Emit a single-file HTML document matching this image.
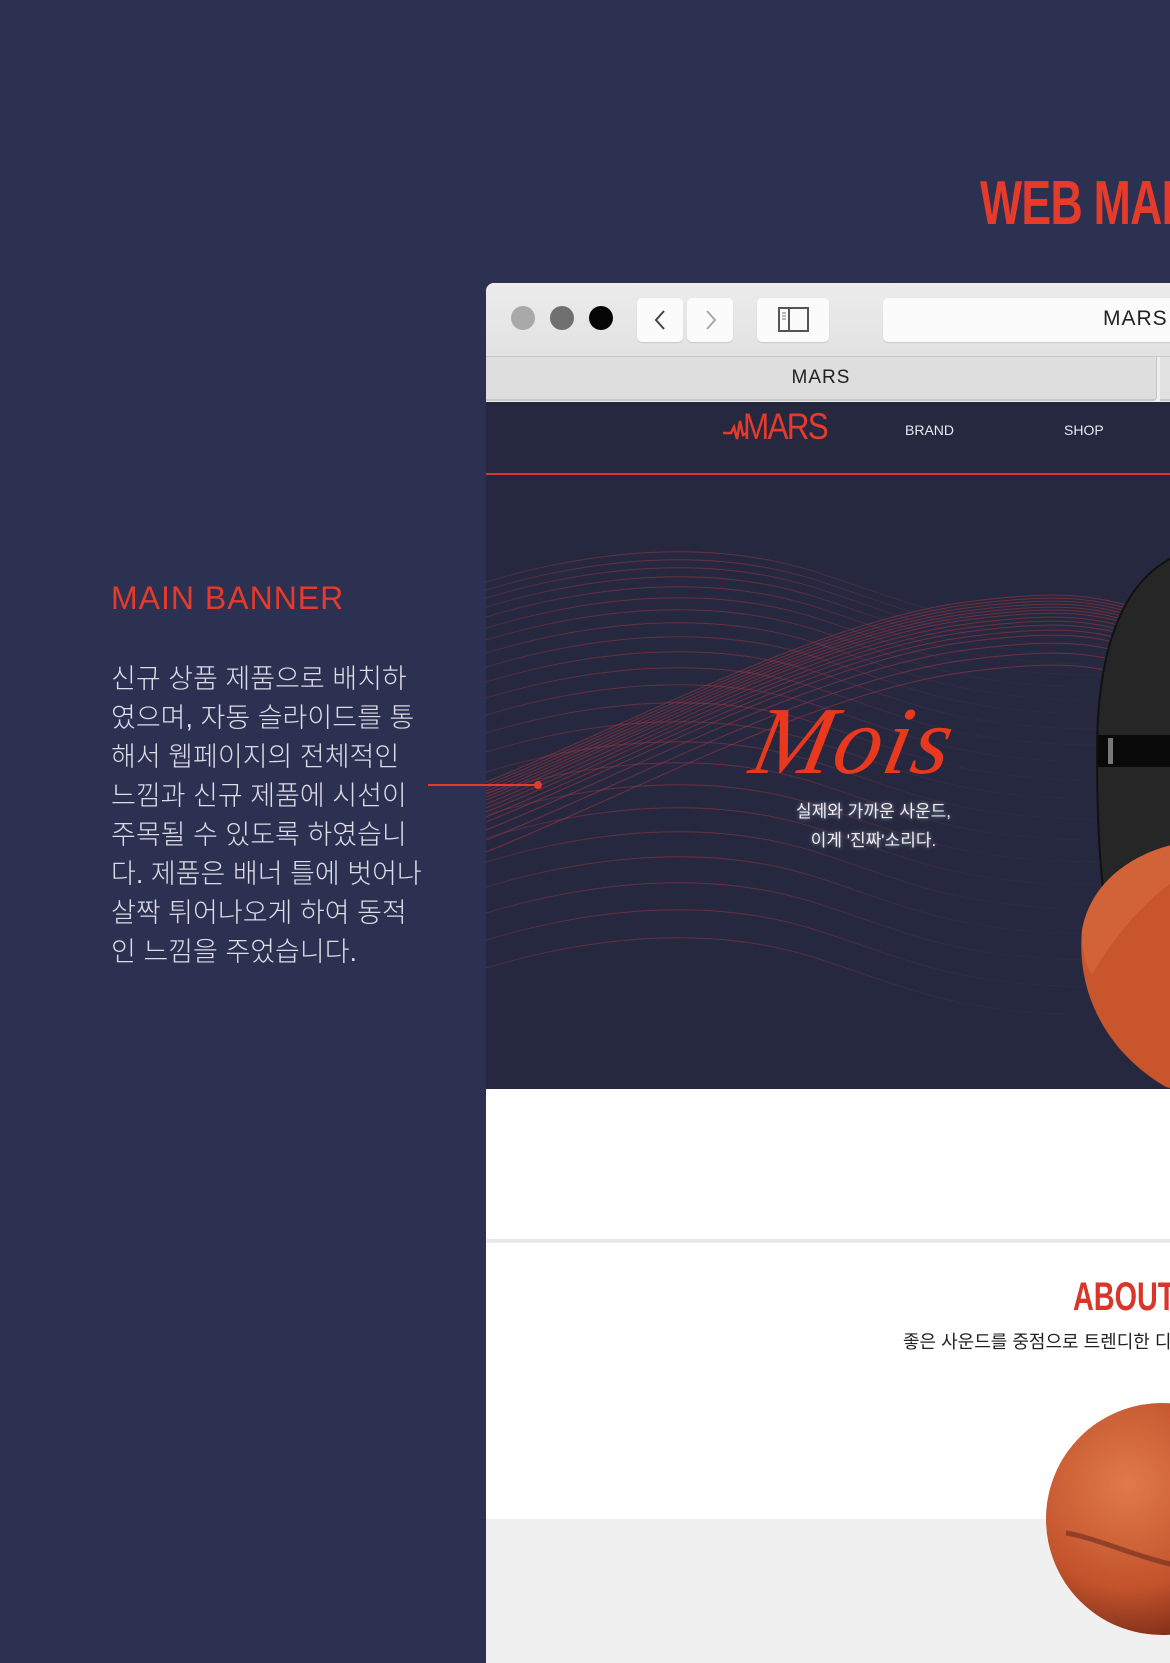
<!DOCTYPE html>
<html><head><meta charset="utf-8"><style>
*{margin:0;padding:0;box-sizing:border-box}
body{width:1170px;height:1654px;overflow:hidden;background:#2c3152;position:relative;font-family:"Liberation Sans","Noto Sans CJK KR",sans-serif}
.abs{position:absolute}
.title{left:980px;top:168px;font-weight:bold;font-size:62px;color:#e63a2a;white-space:nowrap;letter-spacing:-1px;transform:scaleX(.72);transform-origin:left}
.mb{left:111px;top:580px;color:#e63a2a;font-size:32px;letter-spacing:1px;white-space:nowrap}
.para{left:111px;top:660px;color:#dcdde6;font-size:27px;line-height:39px;font-weight:300;white-space:nowrap;font-family:"Liberation Sans","Noto Sans CJK KR",sans-serif}
.browser{left:486px;top:283px;width:684px;height:1380px;background:#f0f0f0;border-radius:8px 0 0 0;overflow:hidden}
.tool{left:0;top:0;width:700px;height:74px;background:linear-gradient(#ececec,#e2e2e2);border-bottom:1px solid #c9c9c9}
.dot{width:24px;height:24px;border-radius:50%;top:23px}
.btn{background:#fbfbfb;border-radius:5px;box-shadow:0 1px 1px rgba(0,0,0,.12)}
.tab{left:0;top:74px;width:671px;height:44px;background:#dedede;border-bottom:2px solid #c8c8c8;border-right:1px solid #c4c4c4;border-radius:0 0 4px 0;text-align:center;line-height:42px;font-size:19px;color:#222;letter-spacing:1px}
.nav{left:0;top:119px;width:700px;height:687px;background:#262840;overflow:hidden}
</style></head><body>
<div class="abs title">WEB MAIN</div>
<div class="abs mb">MAIN BANNER</div>
<div class="abs para">신규 상품 제품으로 배치하<br>였으며, 자동 슬라이드를 통<br>해서 웹페이지의 전체적인<br>느낌과 신규 제품에 시선이<br>주목될 수 있도록 하였습니<br>다. 제품은 배너 틀에 벗어나<br>살짝 튀어나오게 하여 동적<br>인 느낌을 주었습니다.</div>

<div class="abs browser">
 <div class="abs tool">
  <div class="abs dot" style="left:25px;background:#a9a9a9"></div>
  <div class="abs dot" style="left:64px;background:#6f6f6f"></div>
  <div class="abs dot" style="left:103px;background:#050505"></div>
  <div class="abs btn" style="left:151px;top:15px;width:46px;height:44px"></div>
  <div class="abs btn" style="left:201px;top:15px;width:46px;height:44px"></div>
  <svg class="abs" style="left:151px;top:15px" width="96" height="44"><path d="M27 13 L19 22 L27 31" fill="none" stroke="#444" stroke-width="2"/><path d="M70 13 L78 22 L70 31" fill="none" stroke="#aaa" stroke-width="2"/></svg>
  <div class="abs btn" style="left:271px;top:15px;width:72px;height:44px"></div>
  <svg class="abs" style="left:292px;top:24px" width="32" height="26"><rect x="1" y="1" width="29" height="23" fill="none" stroke="#555" stroke-width="2"/><line x1="11" y1="1" x2="11" y2="24" stroke="#555" stroke-width="2"/><line x1="4" y1="6" x2="8" y2="6" stroke="#777"/><line x1="4" y1="9" x2="8" y2="9" stroke="#777"/><line x1="4" y1="12" x2="8" y2="12" stroke="#777"/></svg>
  <div class="abs btn" style="left:397px;top:15px;width:320px;height:44px"></div>
  <div class="abs" style="left:617px;top:24px;font-size:21px;color:#222;letter-spacing:1px">MARS</div>
 </div>
 <div class="abs tab">MARS</div>
 <div class="abs" style="left:674px;top:74px;width:30px;height:44px;background:#e2e2e2;border-bottom:2px solid #c8c8c8"></div>
 <div class="abs nav">
  <svg class="abs" style="left:0;top:0" width="700" height="700">
   <defs>
    <linearGradient id="g1" x1="0" y1="0" x2="0" y2="1"><stop offset="0" stop-color="#b33a3a" stop-opacity=".8"/><stop offset="1" stop-color="#5a3060" stop-opacity=".25"/></linearGradient>
    <path id="w1" d="M0,180 C100,150 220,135 330,170 S480,235 700,225" fill="none" stroke="url(#g1)" stroke-width="1"/>
    <path id="w2" d="M0,380 C150,320 330,220 480,200 S620,210 700,210" fill="none" stroke="#a8383e" stroke-width="1"/>
   </defs>
   <g opacity=".6">
    <use href="#w1"/><use href="#w1" y="8"/><use href="#w1" y="16"/><use href="#w1" y="25"/><use href="#w1" y="35"/><use href="#w1" y="46"/><use href="#w1" y="58"/><use href="#w1" y="71"/><use href="#w1" y="85"/><use href="#w1" y="100"/><use href="#w1" y="116"/><use href="#w1" y="133"/><use href="#w1" y="151"/><use href="#w1" y="170"/><use href="#w1" y="190"/><use href="#w1" y="211"/><use href="#w1" y="233"/><use href="#w1" y="256"/><use href="#w1" y="280"/><use href="#w1" y="305"/><use href="#w1" y="331"/><use href="#w1" y="358"/><use href="#w1" y="386"/>
   </g>
   <g opacity=".55">
    <use href="#w2"/><use href="#w2" y="3"/><use href="#w2" y="6"/><use href="#w2" y="9"/><use href="#w2" y="12"/><use href="#w2" y="15"/><use href="#w2" y="18"/><use href="#w2" y="22"/><use href="#w2" y="26"/><use href="#w2" y="30"/><use href="#w2" y="35"/><use href="#w2" y="40"/><use href="#w2" y="48"/><use href="#w2" y="58"/><use href="#w2" y="70"/>
   </g>
   <path d="M700,150 C640,170 611,240 611,350 C611,470 620,560 650,590 L700,610 Z" fill="#262626" stroke="#111" stroke-width="2"/>
   <rect x="612" y="333" width="90" height="32" fill="#0a0a0a"/>
   <rect x="622" y="336" width="5" height="26" fill="#777"/>
   <path d="M700,440 C650,448 605,478 596,528 C590,590 620,650 680,685 L700,690 Z" fill="#c9552c"/>
   <path d="M700,440 C650,448 605,478 596,528 C595,548 600,563 606,573 C630,528 680,478 700,473 Z" fill="#d86a3f" opacity=".6"/>
  </svg>
  <div class="abs" style="left:0;top:71px;width:700px;height:2px;background:#d8382c"></div>
  <svg class="abs" style="left:237px;top:11px" width="30" height="34"><polyline points="0,20 8,20 11,14 14,26 17,8 20,22 24,20" fill="none" stroke="#e63a2a" stroke-width="2.5"/></svg>
  <div class="abs" style="left:257px;top:4px;font-size:37px;color:#e63a2a;letter-spacing:-2px;transform:scaleX(.85);transform-origin:left">MARS</div>
  <div class="abs" style="left:419px;top:20px;font-size:14px;color:#e8e8ee">BRAND</div>
  <div class="abs" style="left:578px;top:20px;font-size:14px;color:#e8e8ee">SHOP</div>
  <div class="abs" style="left:268px;top:283px;font-family:'Liberation Serif',serif;font-style:italic;font-size:96px;color:#e8391f;transform:skewX(-12deg);letter-spacing:2px">Mois</div>
  <div class="abs" style="left:230px;top:395px;width:315px;text-align:center;font-size:17px;line-height:29px;color:#ededf2;text-shadow:0 0 4px rgba(255,255,255,.5)">실제와 가까운 사운드,<br>이게 '진짜'소리다.</div>
 </div>
 <div class="abs" style="left:0;top:806px;width:700px;height:150px;background:#fff;box-shadow:0 4px 8px rgba(0,0,0,.05)"></div>
 <div class="abs" style="left:0;top:960px;width:700px;height:276px;background:#fff"></div>
 <div class="abs" style="left:587px;top:992px;font-weight:bold;font-size:40px;color:#d9352a;white-space:nowrap;transform:scaleX(.72);transform-origin:left">ABOUT US</div>
 <div class="abs" style="left:417px;top:1045px;font-size:18px;color:#222;white-space:nowrap">좋은 사운드를 중점으로 트렌디한 디자인</div>
 <svg class="abs" style="left:540px;top:1100px" width="200" height="260">
  <defs><radialGradient id="pl" cx=".35" cy=".35" r=".75"><stop offset="0" stop-color="#e07a4a"/><stop offset=".6" stop-color="#c2532c"/><stop offset="1" stop-color="#6e2414"/></radialGradient></defs>
  <circle cx="136" cy="136" r="116" fill="url(#pl)"/>
  <path d="M40,150 C70,155 100,170 140,180 S180,190 200,200" fill="none" stroke="#6a2a1a" stroke-width="5" opacity=".6"/>
 </svg>
</div>
<div class="abs" style="left:428px;top:784px;width:110px;height:2px;background:#e63a2a"></div>
<div class="abs" style="left:534px;top:781px;width:8px;height:8px;border-radius:50%;background:#e63a2a"></div>
</body></html>
